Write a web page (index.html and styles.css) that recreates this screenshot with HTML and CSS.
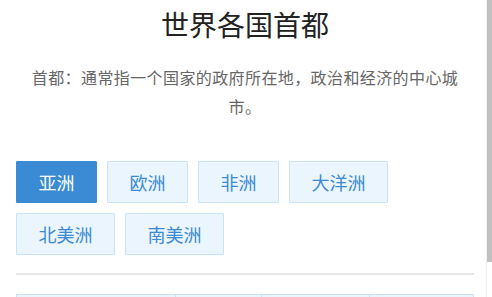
FILE: index.html
```html
<!DOCTYPE html>
<html lang="zh-CN">
<head>
    <meta charset="UTF-8">
    <meta name="viewport" content="width=device-width, initial-scale=1.0">
    <title>世界各国首都</title>
    <link rel="stylesheet" href="styles.css">
</head>
<body>
    <div class="container">
        <h1 class="title">世界各国首都</h1>
        <p class="desc">首都：通常指一个国家的政府所在地，政治和经济的中心城市。</p>

        <div class="tabs">
            <button class="tab active">亚洲</button>
            <button class="tab">欧洲</button>
            <button class="tab">非洲</button>
            <button class="tab">大洋洲</button>
            <button class="tab">北美洲</button>
            <button class="tab">南美洲</button>
        </div>

        <hr class="line">

        <table class="capitals">
            <tr>
                <th class="col-country">国家</th>
                <th class="col-capital">首都</th>
                <th class="col-area">面积</th>
                <th class="col-pop">人口</th>
            </tr>
        </table>
    </div>

    <!-- scrollbar of the page frame -->
    <div class="scroll-track"><div class="scroll-thumb"></div></div>
</body>
</html>
```

FILE: styles.css
```css
body {
    margin: 0;
    font-family: "Noto Sans CJK SC", "Noto Sans", sans-serif;
    background: #fff;
    color: #333;
}
.container {
    padding: 0 18px 4px 16px;
}
.title {
    margin: 4px 0 0;
    font-size: 28px;
    line-height: 40px;
    font-weight: normal;
    text-align: center;
    color: #222;
}
.desc {
    margin: 19px 0 0;
    padding: 0 14px;
    font-size: 16px;
    letter-spacing: 0.4px;
    line-height: 29px;
    text-align: center;
    color: #666;
}
.tabs {
    display: flex;
    flex-wrap: wrap;
    gap: 10px;
    margin-top: 40px;
}
.tab {
    height: 42px;
    padding: 0 21.5px;
    border: 1px solid #c8e3fa;
    background: #ebf5fe;
    color: #3a8bd3;
    font-family: inherit;
    font-size: 18px;
    border-radius: 1px;
}
.tab.active {
    background: #3a8bd3;
    border-color: #3a8bd3;
    color: #fff;
}
.line {
    margin: 18px 0 0;
    border: none;
    border-top: 2px solid #e6e6e6;
}
.capitals {
    width: 100%;
    margin-top: 19px;
    border-collapse: collapse;
}
.capitals th {
    height: 40px;
    padding-top: 14px;
    border: 1px solid #c8e3fa;
    background: #ebf5fe;
    color: #3a8bd3;
    font-weight: normal;
    font-size: 16px;
}
.col-country { width: 156px; }
.col-capital { width: 83px; }
.col-area { width: 105px; }

.scroll-track {
    position: fixed;
    top: 0;
    right: 0;
    width: 5px;
    height: 100%;
    background: #fff;
    border-left: 1px solid #f0f0f0;
}
.scroll-thumb {
    width: 5px;
    height: 262px;
    background: #c1c1c1;
}
```
